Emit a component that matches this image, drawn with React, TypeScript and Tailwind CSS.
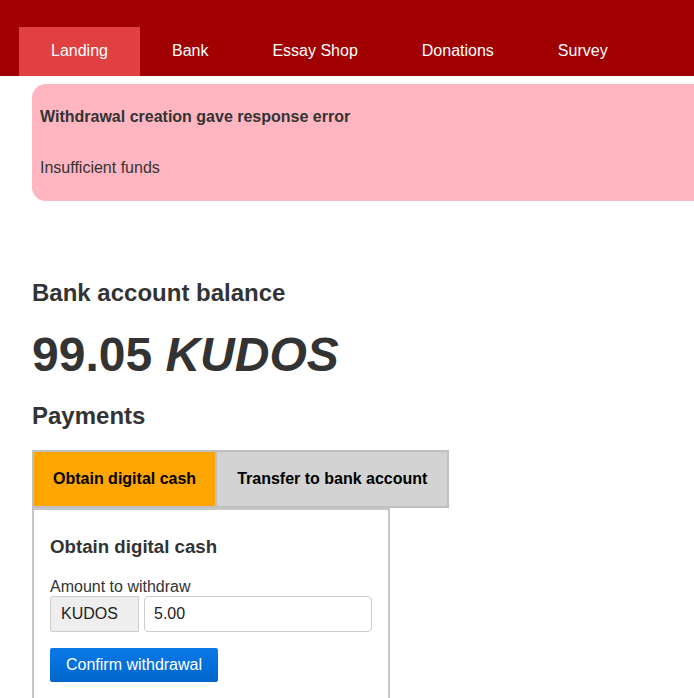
const navItems = ["Landing", "Bank", "Essay Shop", "Donations", "Survey"];

export default function App() {
  return (
    <div className="min-h-[698px] overflow-hidden bg-white font-['Liberation_Sans',Arial,sans-serif] text-base text-[#333]">
      <header className="flex h-[76px] items-end bg-[#a00000] pl-[19px]">
        <nav className="flex">
          {navItems.map((item, i) => (
            <a
              key={item}
              href="#"
              className={
                i === 0
                  ? "flex h-[49px] items-center bg-[#e04040] px-8 pb-[2px] text-white"
                  : "flex h-[49px] items-center px-8 pb-[2px] text-white"
              }
            >
              {item}
            </a>
          ))}
        </nav>
      </header>

      <main className="pl-8">
        <div className="mt-2 -mr-8 rounded-l-[14px] bg-[#ffb6c1] px-2 pt-[23px] pb-[24px]">
          <p className="leading-[19px] font-bold">
            Withdrawal creation gave response error
          </p>
          <p className="mt-8 leading-[19px]">Insufficient funds</p>
        </div>

        <h2 className="mt-[78px] text-2xl leading-7 font-bold">
          Bank account balance
        </h2>
        <div className="mt-5 text-5xl leading-[56px] font-bold">
          99.05 <i>KUDOS</i>
        </div>
        <h2 className="mt-[19px] text-2xl leading-7 font-bold">Payments</h2>

        <div className="mt-5 inline-flex gap-[2px] border-2 border-[#c0c0c0] bg-[#c0c0c0]">
          <button className="h-[54px] bg-[#ffa500] px-[19px] font-bold text-black">
            Obtain digital cash
          </button>
          <button className="h-[54px] bg-[#d3d3d3] px-[20px] font-bold text-black">
            Transfer to bank account
          </button>
        </div>

        <section className="w-[358px] border-2 border-[#c6c6c6] px-4 pt-[26px] pb-6">
          <h3 className="text-[18.7px] leading-[22px] font-bold">
            Obtain digital cash
          </h3>
          <label className="mt-[19px] block leading-[19px]">
            Amount to withdraw
          </label>
          <div className="flex h-9 gap-[5px]">
            <span className="flex w-[89px] items-center rounded-l-[3px] border border-[#ccc] bg-[#eee] pl-[10px] text-[#222]">
              KUDOS
            </span>
            <input
              className="flex-1 rounded-[4px] border border-[#ccc] bg-white px-[9px] text-[#222] outline-none"
              defaultValue="5.00"
            />
          </div>
          <button className="mt-4 h-[34px] w-[168px] rounded-[2px] bg-gradient-to-b from-[#0a7ae8] to-[#0066cc] text-white">
            Confirm withdrawal
          </button>
        </section>
      </main>
    </div>
  );
}
